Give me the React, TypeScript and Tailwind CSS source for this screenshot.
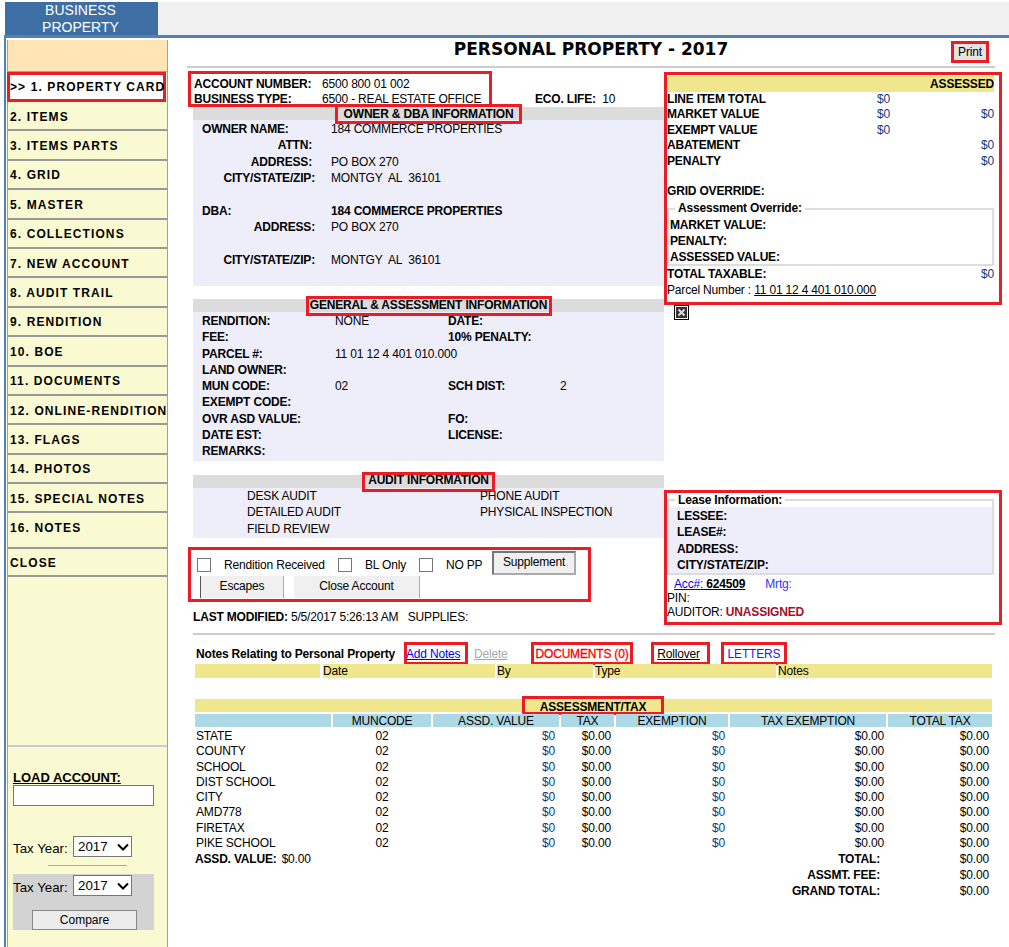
import React from "react";

const nav = ["2. ITEMS","3. ITEMS PARTS","4. GRID","5. MASTER","6. COLLECTIONS","7. NEW ACCOUNT","8. AUDIT TRAIL","9. RENDITION","10. BOE","11. DOCUMENTS","12. ONLINE-RENDITION","13. FLAGS","14. PHOTOS","15. SPECIAL NOTES"];

function Section({ title, boxClass }: { title: string; boxClass: string }) {
  return (
    <div className="h-[13px] bg-[#dcdcdc] flex items-center justify-center">
      <span className={"h-[20px] shrink-0 border-[3px] border-[#ed1c24] font-bold whitespace-nowrap text-center " + boxClass}>{title}</span>
    </div>
  );
}

function Chevron() {
  return (
    <svg className="absolute right-[3px] top-[7px]" width="12" height="8" viewBox="0 0 12 8"><path d="M1 1.5 L6 6.5 L11 1.5" fill="none" stroke="#000" strokeWidth="2" /></svg>
  );
}

function YearSelect() {
  return (
    <div className="relative w-[59px] h-[21px]">
      <select defaultValue="2017" className="block appearance-none w-full h-full border border-[#767676] bg-white pl-[4px] text-[13.33px] leading-none">
        <option>2017</option>
      </select>
      <Chevron />
    </div>
  );
}

function Sidebar() {
  return (
    <div className="w-[161px] ml-[1px] shrink-0 border-l border-r border-[#a0a0a0] bg-[#fafad2] h-[907px] mt-[2px] text-[12px] font-bold tracking-[1.1px]">
      <div className="h-[32px] bg-[#ffe4b5] border-b border-[#a0a0a0]" />
      <div className="-ml-px w-[159px] h-[30px] bg-white border-[3px] border-[#ed1c24] flex items-center whitespace-nowrap">&gt;&gt; 1. PROPERTY CARD</div>
      {nav.map((n) => (
        <div key={n} className="h-[29.4px] border-b-2 border-[#999] pl-[2px] pt-[2px] flex items-center whitespace-nowrap">
          <span>{n}</span>
        </div>
      ))}
      <div className="h-[36px] border-b-2 border-[#999] pl-[2px] pt-[6px]">16. NOTES</div>
      <div className="h-[28px] border-b-2 border-[#999] pl-[2px] pt-[2px] flex items-center">CLOSE</div>
      <div className="h-[170px] border-b-2 border-[#ccc]" />
      <div className="px-[5px] font-normal tracking-normal">
        <div className="mt-[23px] h-[15px] text-[13px] font-bold underline leading-[15px]">LOAD ACCOUNT:</div>
        <input className="block w-[141px] h-[21px] border border-[#767676] bg-white" />
        <div className="mt-[30px] flex items-center text-[13.3px]"><span className="w-[60px] pt-[3px] leading-[15px]">Tax Year:</span><YearSelect /></div>
        <div className="mt-[8px] mx-[35px] h-px bg-[#aaa]" />
        <div className="mt-[8px] w-[141px] h-[56px] bg-[#d3d3d3] text-[13.3px]">
          <div className="flex items-center pt-px"><span className="w-[60px] pt-[3px] leading-[15px]">Tax Year:</span><YearSelect /></div>
          <div className="mt-[14px] ml-[19px] w-[105px] h-[20px] border border-[#888] bg-[#ececec] text-[12px] flex items-center justify-center">Compare</div>
        </div>
      </div>
    </div>
  );
}

function Owner() {
  const rows: [string, string, string, boolean?][] = [
    ["OWNER NAME:", "184 COMMERCE PROPERTIES", "text-left"],
    ["ATTN:", "", "text-right pr-[3px]"],
    ["ADDRESS:", "PO BOX 270", "text-right pr-[3px]"],
    ["CITY/STATE/ZIP:", "MONTGY  AL  36101", "text-right"],
    ["", "", ""],
    ["DBA:", "184 COMMERCE PROPERTIES", "text-left", true],
    ["ADDRESS:", "PO BOX 270", "text-right"],
    ["", "", ""],
    ["CITY/STATE/ZIP:", "MONTGY  AL  36101", "text-right"],
  ];
  return (
    <div className="h-[166px] bg-[#eeeefb] pt-px pl-[9px]">
      {rows.map((r, i) => (
        <div key={i} className="grid grid-cols-[113px_1fr] gap-x-[16px] h-[16.4px] leading-[16px]">
          <span className={"font-bold whitespace-nowrap " + r[2]}>{r[0]}</span>
          <span className={"whitespace-pre " + (r[3] ? "font-bold" : "")}>{r[1]}</span>
        </div>
      ))}
    </div>
  );
}

function General() {
  const rows = [
    ["RENDITION:", "NONE", "DATE:", ""],
    ["FEE:", "", "10% PENALTY:", ""],
    ["PARCEL #:", "11 01 12 4 401 010.000", "", ""],
    ["LAND OWNER:", "", "", ""],
    ["MUN CODE:", "02", "SCH DIST:", "2"],
    ["EXEMPT CODE:", "", "", ""],
    ["OVR ASD VALUE:", "", "FO:", ""],
    ["DATE EST:", "", "LICENSE:", ""],
    ["REMARKS:", "", "", ""],
  ];
  return (
    <div className="h-[149px] bg-[#eeeefb] pt-px pl-[9px]">
      {rows.map((r, i) => (
        <div key={i} className="grid grid-cols-[133px_113px_112px_1fr] h-[16.3px] leading-[16px] whitespace-nowrap">
          <span className="font-bold">{r[0]}</span>
          <span>{r[1]}</span>
          <span className="font-bold">{r[2]}</span>
          <span>{r[3]}</span>
        </div>
      ))}
    </div>
  );
}

function Check() {
  return <span className="w-[14px] h-[14px] border border-[#767676] bg-white shrink-0" />;
}

function LeftCol() {
  return (
    <div className="w-[471px] shrink-0">
      <div className="flex items-end h-[36px]">
        <div className="-ml-[5px] w-[304px] h-[36px] border-[3px] border-[#ed1c24] pl-[3px] leading-[15px] pt-[3px]">
          <div className="grid grid-cols-[128px_1fr] font-bold"><span>ACCOUNT NUMBER:</span><span className="font-normal">6500 800 01 002</span></div>
          <div className="grid grid-cols-[128px_1fr] font-bold whitespace-nowrap"><span>BUSINESS TYPE:</span><span className="font-normal">6500 - REAL ESTATE OFFICE</span></div>
        </div>
        <div className="ml-[43px] leading-[15px] whitespace-nowrap"><b>ECO. LIFE:</b>&nbsp; 10</div>
      </div>
      <Section title="OWNER & DBA INFORMATION" boxClass="w-[187px] leading-[14px]" />
      <Owner />
      <div className="h-[13px]" />
      <Section title="GENERAL & ASSESSMENT INFORMATION" boxClass="w-[246px] leading-[12px]" />
      <General />
      <div className="h-[14px]" />
      <Section title="AUDIT INFORMATION" boxClass="w-[133px] leading-[11px]" />
      <div className="h-[50px] bg-[#eeeefb] pl-[54px] grid grid-cols-[233px_1fr] auto-rows-[16.4px] leading-[16px]">
        <span>DESK AUDIT</span><span>PHONE AUDIT</span>
        <span>DETAILED AUDIT</span><span>PHYSICAL INSPECTION</span>
        <span>FIELD REVIEW</span>
      </div>
      <div className="mt-[9px] -ml-[5px] w-[403px] h-[55px] border-[3px] border-[#ed1c24] pl-[6px]">
        <div className="flex items-center h-[26px] pt-[4px]">
          <Check /><span className="ml-[13px] w-[114px]">Rendition Received</span>
          <Check /><span className="ml-[13px] w-[54px]">BL Only</span>
          <Check /><span className="ml-[13px] w-[46px]">NO PP</span>
          <span className="w-[84px] h-[24px] -mt-[5px] border-2 border-t-[#777] border-l-[#777] border-r-[#aaa] border-b-[#aaa] bg-[#f0f0f0] flex items-center justify-center pb-[2px]">Supplement</span>
        </div>
        <div className="flex h-[22px] ml-[3px]">
          <span className="w-[84px] border-l border-l-[#555] border-r border-r-[#aaa] bg-[#f0f0f0] flex items-center justify-center pb-[2px]">Escapes</span>
          <span className="ml-[10px] w-[126px] border-r border-r-[#aaa] bg-[#f0f0f0] flex items-center justify-center pb-[2px]">Close Account</span>
        </div>
      </div>
      <div className="mt-[7px] h-[16px] leading-[16px] whitespace-nowrap"><b>LAST MODIFIED:</b> 5/5/2017 5:26:13 AM &nbsp;&nbsp;SUPPLIES:</div>
    </div>
  );
}

const val = "text-[#0d3a80]";

function RightCol() {
  const rows = [
    ["LINE ITEM TOTAL", "$0", ""],
    ["MARKET VALUE", "$0", "$0"],
    ["EXEMPT VALUE", "$0", ""],
    ["ABATEMENT", "", "$0"],
    ["PENALTY", "", "$0"],
  ];
  return (
    <div className="w-[338px] shrink-0 pt-px">
      <div className="h-[233px] border-[3px] border-[#ed1c24] pr-[5px]">
        <div className="mt-px h-[16px] bg-[#f0e68c] text-right font-bold leading-[16px]">ASSESSED</div>
        {rows.map((r, i) => (
          <div key={i} className="grid grid-cols-[210px_1fr_auto] h-[15.4px] leading-[15px]">
            <b>{r[0]}</b><span className={val}>{r[1]}</span><span className={val}>{r[2]}</span>
          </div>
        ))}
        <div className="h-[16px]" />
        <div className="h-[15.5px] leading-[13px] font-bold">GRID OVERRIDE:</div>
        <fieldset className="h-[66px] border-2 border-[#ddd] pb-0">
          <legend className="ml-[6px] px-[3px] font-bold leading-[17px]">Assessment Override:</legend>
          <div className="pl-[1px] font-bold leading-[16px]">
            <div>MARKET VALUE:</div>
            <div>PENALTY:</div>
            <div>ASSESSED VALUE:</div>
          </div>
        </fieldset>
        <div className="flex justify-between h-[16px] leading-[16px]"><b>TOTAL TAXABLE:</b><span className={val}>$0</span></div>
        <div className="h-[16px] leading-[16px]">Parcel Number : <span className="underline">11 01 12 4 401 010.000</span></div>
      </div>
      <svg className="ml-[10px] block" width="15" height="15" viewBox="0 0 15 15">
        <rect x="0.5" y="0.5" width="14" height="14" fill="#fff" stroke="#000" />
        <rect x="2" y="2" width="11" height="11" fill="#333" />
        <path d="M4.5 4.5 L10.5 10.5 M10.5 4.5 L4.5 10.5" stroke="#ddd" strokeWidth="2" />
      </svg>
      <div className="mt-[170px] h-[135px] border-[3px] border-[#ed1c24] pr-[5px]">
        <fieldset className="h-[82px] border-2 border-[#ddd] bg-white">
          <legend className="ml-[6px] px-[3px] font-bold leading-[14px]">Lease Information:</legend>
          <div className="h-full bg-[#eeeefb] pl-[8px] font-bold leading-[16.4px] pt-px">
            <div>LESSEE:</div>
            <div>LEASE#:</div>
            <div>ADDRESS:</div>
            <div>CITY/STATE/ZIP:</div>
          </div>
        </fieldset>
        <div className="h-[17px] pl-[7px] pt-px leading-[17px] whitespace-nowrap">
          <span className="text-[#0000ee] underline">Acc#:</span><span className="font-bold underline"> 624509</span>
          <span className="ml-[20px] text-[#3333ff]">Mrtg:</span>
        </div>
        <div className="h-[13px] leading-[13px]">PIN:</div>
        <div className="h-[14px] leading-[14px]">AUDITOR: <b className="text-[#a0102a]">UNASSIGNED</b></div>
      </div>
    </div>
  );
}

const taxRows = ["STATE","COUNTY","SCHOOL","DIST SCHOOL","CITY","AMD778","FIRETAX","PIKE SCHOOL"];
const cols = "grid grid-cols-[136px_98px_126px_53px_112px_156px_104px] gap-x-[2px]";

function Boxed({ children, className }: { children: React.ReactNode; className: string }) {
  return <span className={"h-[23px] shrink-0 border-[3px] border-[#ed1c24] flex items-center whitespace-nowrap " + className}>{children}</span>;
}

function Bottom() {
  return (
    <div className="w-[797px] ml-[2px]">
      <div className="flex items-center h-[21px] whitespace-nowrap">
        <b className="ml-px w-[208px]">Notes Relating to Personal Property</b>
        <Boxed className="w-[64px]"><span className="-ml-px text-[#0000ee] underline">Add Notes</span></Boxed>
        <span className="ml-[6px] w-[34px] text-[#a8a8a8] underline">Delete</span>
        <Boxed className="ml-[23px] w-[102px] justify-center"><span className="text-[#f00] [-webkit-text-stroke:0.3px_#f00]">DOCUMENTS (0)</span></Boxed>
        <Boxed className="ml-[18px] w-[59px] justify-center pr-[4px]"><span className="underline">Rollover</span></Boxed>
        <Boxed className="ml-[11px] w-[66px] justify-center"><span className="text-[#2020ee]">LETTERS</span></Boxed>
      </div>
      <div className="grid grid-cols-[126px_172px_96px_181px_1fr] gap-x-[2px] h-[13px] leading-[14px]">
        <div className="bg-[#f0e68c] mr-px" /><div className="bg-[#f0e68c]">Date</div><div className="bg-[#f0e68c]">By</div><div className="bg-[#f0e68c]">Type</div><div className="bg-[#f0e68c]">Notes</div>
      </div>
      <div className="mt-[22px] h-[13px] bg-[#f0e68c] flex items-center">
        <span className="ml-[327px] w-[142px] h-[19px] shrink-0 border-[3px] border-[#ed1c24] flex items-center justify-center font-bold pt-[2px]">ASSESSMENT/TAX</span>
      </div>
      <div className={cols + " mt-[2px] h-[13px] leading-[15px] text-center"}>
        <div className="bg-[#add8e6]" />
        {["MUNCODE","ASSD. VALUE","TAX","EXEMPTION","TAX EXEMPTION","TOTAL TAX"].map((h) => <div key={h} className="bg-[#add8e6] h-[13px]">{h}</div>)}
      </div>
      <div className="mt-[2px]">
        {taxRows.map((r) => (
          <div key={r} className={cols + " h-[15.3px] leading-[15px]"}>
            <span className="pl-px">{r}</span>
            <span className="text-center">02</span>
            <span className={"text-right pr-[4px] " + val}>$0</span>
            <span className="text-right pr-[3px]">$0.00</span>
            <span className={"text-right pr-[3px] " + val}>$0</span>
            <span className="text-right pr-[2px]">$0.00</span>
            <span className="text-right pr-[3px]">$0.00</span>
          </div>
        ))}
      </div>
      <div className="leading-[16px]">
        <div className="flex h-[16px]"><b>ASSD. VALUE:</b><span className="ml-[5px]">$0.00</span><b className="ml-auto mr-[59px]">TOTAL:</b><span className="mr-[3px] w-[50px] text-right">$0.00</span></div>
        <div className="flex h-[16px] justify-end"><b className="mr-[59px]">ASSMT. FEE:</b><span className="mr-[3px] w-[50px] text-right">$0.00</span></div>
        <div className="flex h-[16px] justify-end"><b className="mr-[59px]">GRAND TOTAL:</b><span className="mr-[3px] w-[50px] text-right">$0.00</span></div>
      </div>
    </div>
  );
}

export default function App() {
  return (
    <div className="w-[1009px] h-[947px] overflow-hidden bg-white text-black text-[12px] tracking-[-0.18px] [font-family:'Liberation_Sans',Arial,sans-serif]">
      <div className="pt-[2px] pl-[5px]">
        <div className="flex h-[33px]">
          <div className="w-[153px] bg-[#3d6fa5] text-white text-[14px] tracking-normal leading-[17px] text-center pr-[2px] shrink-0">BUSINESS<br />PROPERTY</div>
          <div className="flex-1 bg-[#f0f0f0]" />
        </div>
      </div>
      <div className="ml-[4px] h-[3px] bg-[#4f81bd]" />
      <div className="flex">
        <div className="ml-[4px] w-[2px] h-[909px] bg-[#4f81bd] shrink-0" />
        <Sidebar />
        <div className="w-[841px] shrink-0">
          <div className="relative h-[28px] ml-[19px] mr-[14px] flex justify-center items-center pb-[4px]">
            <span className="[font-family:'DejaVu_Sans',sans-serif] font-bold text-[17px] tracking-normal whitespace-nowrap">PERSONAL PROPERTY - 2017</span>
            <span className="absolute right-[6px] top-[3px] h-[22px] w-[38px] border-[3px] border-[#ed1c24] bg-[#e4e4e4] flex items-center justify-center">Print</span>
          </div>
          <div className="ml-[19px] mr-[14px] h-[2px] bg-[#ccc]" />
          <div className="flex mt-[3px] pl-[25px]">
            <LeftCol />
            <RightCol />
          </div>
          <div className="ml-[25px] mr-[14px] mt-[8px] h-[2px] bg-[#ccc]" />
          <div className="pl-[25px] mt-[8px]">
            <Bottom />
          </div>
        </div>
      </div>
    </div>
  );
}
